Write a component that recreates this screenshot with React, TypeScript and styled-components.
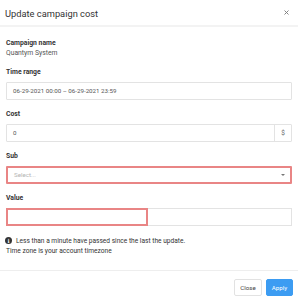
import styled, { createGlobalStyle } from "styled-components"

const Global = createGlobalStyle`
    html, body {
        margin: 0;
        padding: 0;
        background: #fff;
    }
    body {
        font-family: Roboto, "Liberation Sans", sans-serif;
        color: #333;
    }
`

const Modal = styled.div`
    width: 298px;
    height: 300px;
    display: flex;
    flex-direction: column;
    background: #fff;
`

const Header = styled.div`
    height: 25px;
    display: flex;
    align-items: center;
    justify-content: space-between;
    padding: 0 8px 0 5px;
    border-bottom: 2px solid #f3f3f3;
`

const Title = styled.h1`
    margin: 0;
    font-size: 9.3px;
    font-weight: 400;
    color: #333;
    padding-top: 1px;
`

const CloseX = styled.button`
    border: none;
    background: transparent;
    padding: 0;
    width: 7px;
    height: 7px;
    display: flex;
    align-items: center;
    justify-content: center;
    cursor: pointer;
    margin-top: -1px;
`

const Body = styled.div`
    flex: 1;
    padding: 12px 6px 0 6px;
`

const Group = styled.div`
    display: flex;
    flex-direction: column;
    margin-bottom: 10px;
`

const Label = styled.div`
    font-size: 6.8px;
    line-height: 9px;
    font-weight: 700;
    color: #333;
`

const Static = styled.div`
    font-size: 6.8px;
    line-height: 9px;
    color: #555;
    margin-top: 0.5px;
`

const Box = styled.div<{ invalid?: boolean }>`
    margin-top: 5px;
    height: 18px;
    box-sizing: border-box;
    border: ${({ invalid }) => invalid ? "2px solid #e98585" : "1px solid #e3e3e3"};
    border-radius: 1px;
    display: flex;
    align-items: stretch;
    background: #fff;
`

const Field = styled.div<{ muted?: boolean }>`
    flex: 1;
    display: flex;
    align-items: center;
    padding: 0 6px;
    font-size: 6.2px;
    color: ${({ muted }) => muted ? "#b3b3b3" : "#555"};
`

const Addon = styled.div`
    width: 16px;
    display: flex;
    align-items: center;
    justify-content: center;
    border-left: 1px solid #e3e3e3;
    font-size: 6.5px;
    color: #666;
`

const Caret = styled.div`
    width: 14px;
    display: flex;
    align-items: center;
    justify-content: center;

    &:after {
        content: "";
        border-left: 2.5px solid transparent;
        border-right: 2.5px solid transparent;
        border-top: 2.5px solid #777;
    }
`

const SplitRow = styled.div`
    margin-top: 5px;
    height: 18px;
    display: flex;
`

const HalfInput = styled.div<{ invalid?: boolean }>`
    box-sizing: border-box;
    height: 18px;
    width: ${({ invalid }) => invalid ? "142px" : "auto"};
    flex: ${({ invalid }) => invalid ? "0 0 142px" : "1 1 auto"};
    border: ${({ invalid }) => invalid ? "2px solid #e98585" : "1px solid #e3e3e3"};
    border-left-width: ${({ invalid }) => invalid ? "2px" : "0"};
`

const Note = styled.div`
    font-size: 6.6px;
    line-height: 10px;
    color: #333;
`

const NoteLine = styled.div`
    display: flex;
    align-items: center;
    gap: 4px;
`

const InfoIcon = styled.span`
    width: 7px;
    height: 7px;
    border-radius: 50%;
    background: #333;
    color: #fff;
    font-size: 5.5px;
    font-weight: 700;
    font-family: "DejaVu Serif", serif;
    display: inline-flex;
    align-items: center;
    justify-content: center;
    margin-left: -1px;
`

const Footer = styled.div`
    border-top: 1px solid #eee;
    display: flex;
    justify-content: flex-end;
    gap: 4px;
    padding: 8px 5px 4px 0;
`

const Button = styled.button<{ primary?: boolean }>`
    height: 17px;
    box-sizing: border-box;
    padding: 0 4px;
    font-family: Roboto, "Liberation Sans", sans-serif;
    font-size: 6.2px;
    border-radius: 2px;
    border: 1px solid ${({ primary }) => primary ? "#3c9cf2" : "#e2e2e2"};
    background: ${({ primary }) => primary ? "#3c9cf2" : "#fff"};
    color: ${({ primary }) => primary ? "#fff" : "#444"};
    cursor: pointer;
    width: ${({ primary }) => primary ? "27px" : "28px"};
`

export default function App() {
    return (
        <>
            <Global />
            <Modal>
                <Header>
                    <Title>Update campaign cost</Title>
                    <CloseX aria-label="close">
                        <svg width="5" height="5" viewBox="0 0 10 10">
                            <path d="M1 1 L9 9 M9 1 L1 9" stroke="#777" strokeWidth="1.8" />
                        </svg>
                    </CloseX>
                </Header>
                <Body>
                    <Group>
                        <Label>Campaign name</Label>
                        <Static>Quantym System</Static>
                    </Group>
                    <Group>
                        <Label>Time range</Label>
                        <Box>
                            <Field>06-29-2021 00:00 – 06-29-2021 23:59</Field>
                        </Box>
                    </Group>
                    <Group>
                        <Label>Cost</Label>
                        <Box>
                            <Field>0</Field>
                            <Addon>$</Addon>
                        </Box>
                    </Group>
                    <Group>
                        <Label>Sub</Label>
                        <Box invalid>
                            <Field muted>Select...</Field>
                            <Caret />
                        </Box>
                    </Group>
                    <Group>
                        <Label>Value</Label>
                        <SplitRow>
                            <HalfInput invalid />
                            <HalfInput />
                        </SplitRow>
                    </Group>
                    <Note>
                        <NoteLine>
                            <InfoIcon>i</InfoIcon>
                            Less than a minute have passed since the last the update.
                        </NoteLine>
                        <div>Time zone is your account timezone</div>
                    </Note>
                </Body>
                <Footer>
                    <Button>Close</Button>
                    <Button primary>Apply</Button>
                </Footer>
            </Modal>
        </>
    )
}
